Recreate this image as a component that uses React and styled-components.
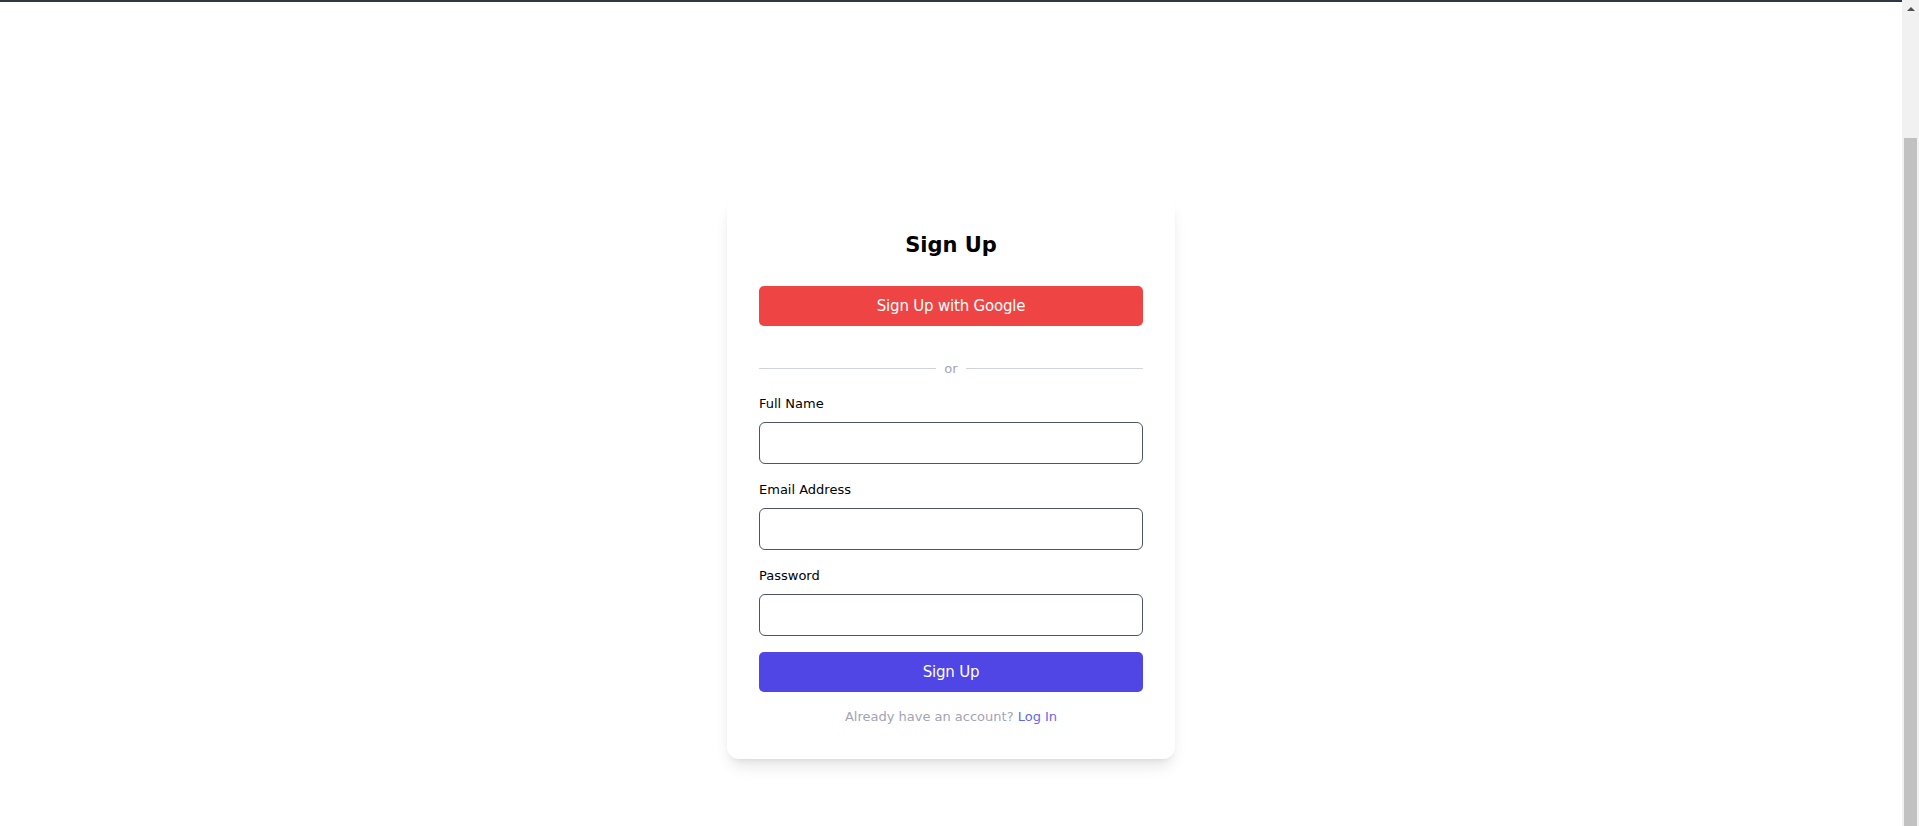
import React, { useLayoutEffect } from "react";
import styled, { createGlobalStyle } from "styled-components";

const GlobalStyle = createGlobalStyle`
  html, body {
    margin: 0;
    padding: 0;
    background: #ffffff;
  }

  body {
    font-family: "DejaVu Sans", "Noto Sans", sans-serif;
    color: #111827;
  }

  * {
    box-sizing: border-box;
  }
`;

const Page = styled.div`
  min-height: 971px;
  display: flex;
  flex-direction: column;
`;

const TopBar = styled.header`
  height: 147px;
  border-bottom: 2px solid #2f3742;
`;

const Main = styled.main`
  display: flex;
  justify-content: center;
  padding: 195px 17px 67px 0;
`;

const Card = styled.div`
  width: 448px;
  padding: 32px;
  background: #ffffff;
  border-radius: 12px;
  box-shadow: 0 10px 15px -3px rgba(0, 0, 0, 0.1),
    0 4px 6px -4px rgba(0, 0, 0, 0.1);
`;

const Title = styled.h1`
  margin: 0 0 25px;
  font-size: 21px;
  line-height: 32px;
  font-weight: 700;
  text-align: center;
  color: #000000;
`;

const Button = styled.button`
  display: block;
  width: 100%;
  height: 40px;
  border: none;
  border-radius: 5px;
  background: ${(p) => p.$bg};
  color: #ffffff;
  font-family: inherit;
  font-size: 15px;
  font-weight: 400;
  letter-spacing: -0.2px;
  cursor: pointer;
`;

const Divider = styled.div`
  display: flex;
  align-items: center;
  gap: 8px;
  margin: 32px 0 16px;
  height: 20px;

  &::before,
  &::after {
    content: "";
    flex: 1;
    height: 1px;
    background: #d1d5db;
  }
`;

const DividerText = styled.span`
  font-size: 13px;
  color: #a0a3bd;
`;

const Field = styled.div`
  margin-bottom: 16px;
`;

const Label = styled.label`
  display: block;
  margin-bottom: 8px;
  font-size: 13px;
  line-height: 20px;
  color: #000000;
`;

const Input = styled.input`
  display: block;
  width: 100%;
  height: 42px;
  padding: 0 12px;
  border: 1px solid #4b5563;
  border-radius: 6px;
  font-family: inherit;
  font-size: 14px;
  outline: none;
`;

const Footer = styled.p`
  margin: 15px 0 0;
  text-align: center;
  font-size: 13px;
  line-height: 20px;
  color: #a3a3b5;
`;

const LogIn = styled.a`
  color: #6366f1;
  font-weight: 400;
  text-decoration: none;
`;

/* browser scrollbar, drawn over the right edge */
const ScrollTrack = styled.div`
  position: fixed;
  top: 0;
  right: 0;
  width: 17px;
  height: 100vh;
  display: flex;
  flex-direction: column;
  background: #f1f1f1;
`;

const ScrollArrow = styled.div`
  height: 17px;
  display: flex;
  align-items: center;
  justify-content: center;

  &::before {
    content: "";
    border-left: 4px solid transparent;
    border-right: 4px solid transparent;
    border-bottom: 4px solid #505050;
  }
`;

const ScrollThumb = styled.div`
  flex: 1;
  margin: 121px 2px 0;
  background: #c1c1c1;
`;

const fields = [
  { id: "name", label: "Full Name", type: "text" },
  { id: "email", label: "Email Address", type: "email" },
  { id: "password", label: "Password", type: "password" },
];

const App = () => {
  useLayoutEffect(() => {
    window.scrollTo(0, 145);
  }, []);

  return (
    <Page>
      <GlobalStyle />
      <TopBar />
      <Main>
        <Card>
          <Title>Sign Up</Title>
          <Button $bg="#ef4444">Sign Up with Google</Button>
          <Divider>
            <DividerText>or</DividerText>
          </Divider>
          {fields.map((f) => (
            <Field key={f.id}>
              <Label htmlFor={f.id}>{f.label}</Label>
              <Input id={f.id} type={f.type} />
            </Field>
          ))}
          <Button $bg="#4f46e5">Sign Up</Button>
          <Footer>
            Already have an account? <LogIn href="#">Log In</LogIn>
          </Footer>
        </Card>
      </Main>
      <ScrollTrack>
        <ScrollArrow />
        <ScrollThumb />
      </ScrollTrack>
    </Page>
  );
};

export default App;
